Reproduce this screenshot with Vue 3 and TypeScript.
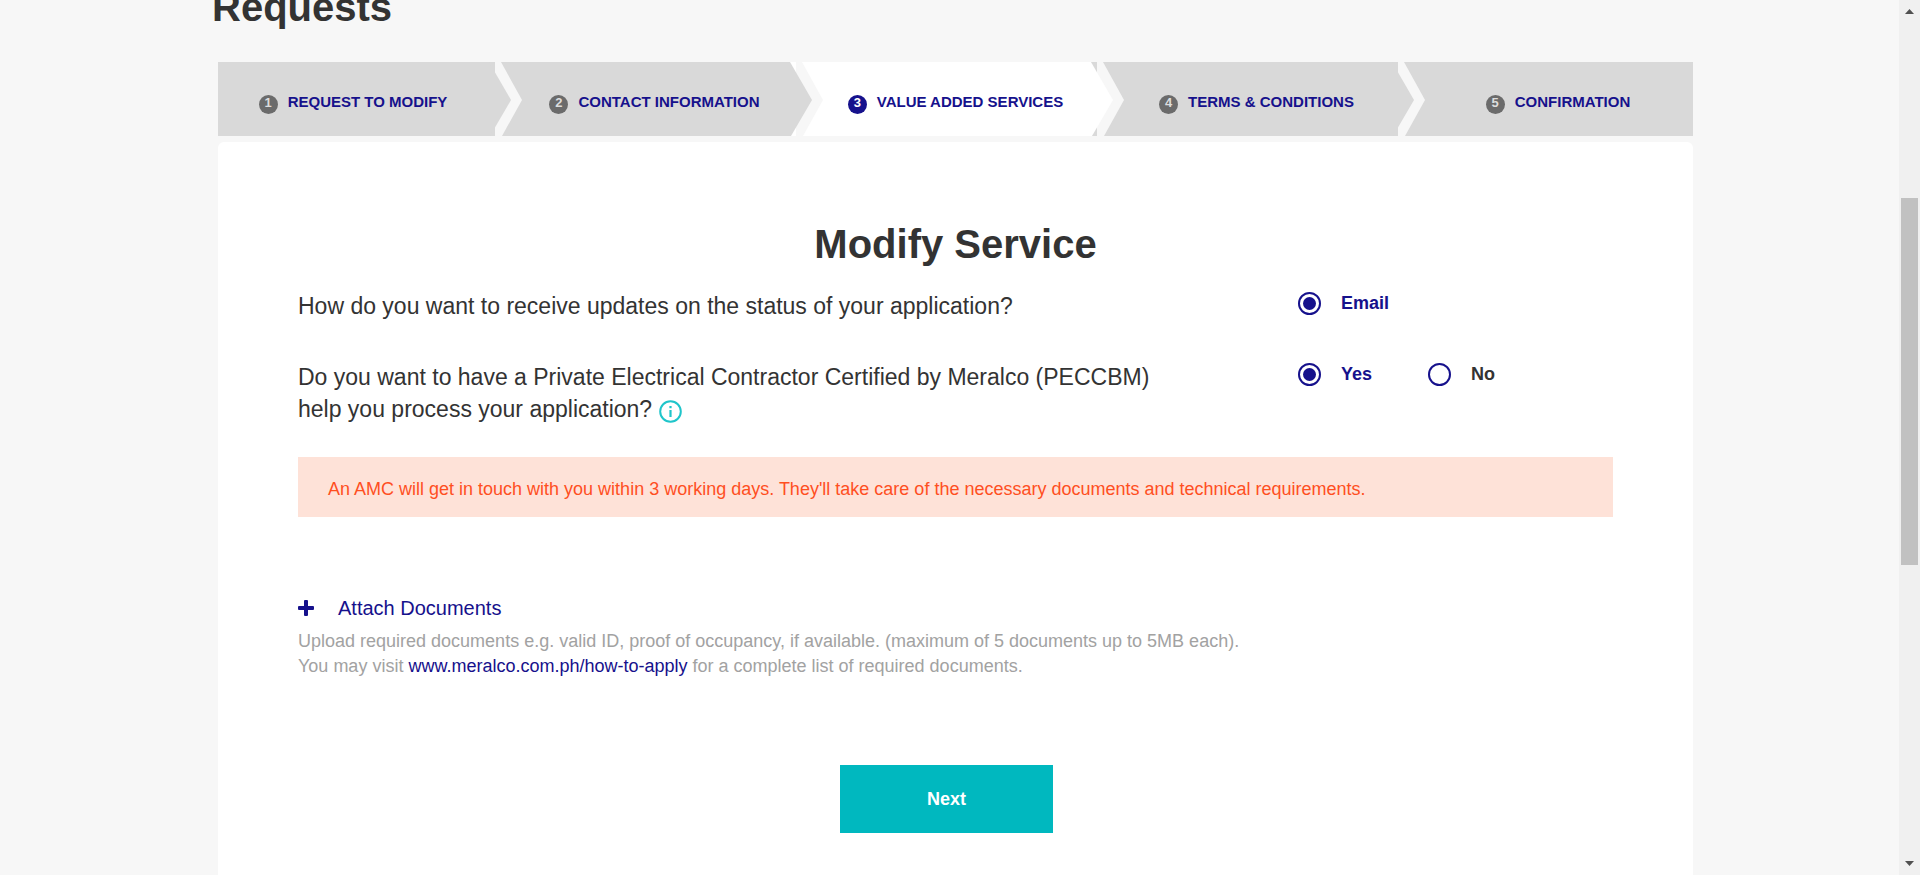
<script setup lang="ts">
import { ref } from 'vue'

interface Step {
  id: number
  label: string
}

const steps: Step[] = [
  { id: 1, label: 'REQUEST TO MODIFY' },
  { id: 2, label: 'CONTACT INFORMATION' },
  { id: 3, label: 'VALUE ADDED SERVICES' },
  { id: 4, label: 'TERMS & CONDITIONS' },
  { id: 5, label: 'CONFIRMATION' },
]

const activeStep = 3
const updates = ref('email')
const contractor = ref('yes')
</script>

<template>
  <div class="page">
    <main class="main">
      <h1 class="page-title">Requests</h1>

      <ol class="steps">
        <li v-for="step in steps" :key="step.id" class="step" :class="{ active: step.id === activeStep, after: step.id === activeStep + 1 }">
          <svg v-if="step.id > 1" class="chevron" viewBox="0 0 33 74" preserveAspectRatio="none" aria-hidden="true">
            <rect class="chevron-next" width="6" height="74" />
            <path class="chevron-gap" d="M6 0H12L33 38L13 74H6Z" />
            <path class="chevron-prev" d="M0 0L22 38L1 74H0Z" />
          </svg>
          <a class="step-link" href="#">
            <span class="step-number">{{ step.id }}</span>
            <span>{{ step.label }}</span>
          </a>
        </li>
      </ol>

      <form class="card" @submit.prevent>
        <h2 class="card-title">Modify Service</h2>

        <div class="question" role="radiogroup" aria-labelledby="q-updates">
          <p id="q-updates" class="question-text">How do you want to receive updates on the status of your application?</p>
          <div class="options">
            <label class="option"><input v-model="updates" type="radio" name="updates" value="email" /><span>Email</span></label>
          </div>
        </div>

        <div class="question" role="radiogroup" aria-labelledby="q-contractor">
          <p id="q-contractor" class="question-text">
            Do you want to have a Private Electrical Contractor Certified by Meralco (PECCBM) help you process your application?
            <svg class="info" viewBox="0 0 23 23" aria-hidden="true">
              <circle cx="11.5" cy="11.5" r="10.3" fill="none" stroke="currentColor" stroke-width="2" />
              <rect x="10.4" y="6" width="2.2" height="2.2" fill="currentColor" />
              <rect x="10.4" y="10" width="2.2" height="7" fill="currentColor" />
            </svg>
          </p>
          <div class="options">
            <label class="option"><input v-model="contractor" type="radio" name="contractor" value="yes" /><span>Yes</span></label>
            <label class="option"><input v-model="contractor" type="radio" name="contractor" value="no" /><span>No</span></label>
          </div>
        </div>

        <p class="notice">An AMC will get in touch with you within 3 working days. They'll take care of the necessary documents and technical requirements.</p>

        <button class="attach" type="button">
          <svg class="plus" viewBox="0 0 16 16" aria-hidden="true">
            <path d="M7 0H9Q10 0 10 1V6H15Q16 6 16 7V9Q16 10 15 10H10V15Q10 16 9 16H7Q6 16 6 15V10H1Q0 10 0 9V7Q0 6 1 6H6V1Q6 0 7 0Z" fill="currentColor" />
          </svg>
          <span>Attach Documents</span>
        </button>
        <p class="hint">
          Upload required documents e.g. valid ID, proof of occupancy, if available. (maximum of 5 documents up to 5MB each).<br />
          You may visit <a href="#">www.meralco.com.ph/how-to-apply</a> for a complete list of required documents.
        </p>

        <button class="next" type="submit">Next</button>
      </form>
    </main>

    <div class="scrollbar" aria-hidden="true">
      <svg class="scroll-arrow" viewBox="0 0 21 21"><path d="M6 14H15L10.5 9Z" fill="#505050" /></svg>
      <div class="track-before"></div>
      <div class="thumb"></div>
      <div class="track-after"></div>
      <svg class="scroll-arrow" viewBox="0 0 21 21"><path d="M6 7H15L10.5 12Z" fill="#505050" /></svg>
    </div>
  </div>
</template>

<style>
body {
  margin: 0;
  background: #f7f7f7;
}
</style>

<style scoped>
.page {
  --navy: #16118c;
  --grey: #d9d9d9;
  --page: #f7f7f7;
  display: flex;
  min-height: 100vh;
  background: var(--page);
  color: #333;
  font-family: "Liberation Sans", Arial, sans-serif;
  overflow: hidden;
}

.main {
  flex: 1;
  display: flex;
  flex-direction: column;
  padding: 0 206px 0 218px;
}

h1,
h2,
p,
ol {
  margin: 0;
  padding: 0;
}

.page-title {
  margin: -13px 0 35px -6px;
  font-size: 40px;
  line-height: 40px;
}

.steps {
  display: grid;
  grid-template-columns: 277fr 301fr 301fr 301fr 295fr;
  margin-bottom: 6px;
  list-style: none;
}

.step {
  --own: var(--grey);
  --prev: var(--grey);
  position: relative;
  display: flex;
  align-items: center;
  justify-content: center;
  box-sizing: border-box;
  min-height: 74px;
  padding: 6px 0 0 18px;
  background: var(--own);
}

.step:first-child {
  padding: 6px 7px 0 0;
}

.step:last-child {
  padding-left: 25px;
}

.step.active {
  --own: #fff;
}

.step.after {
  --prev: #fff;
}

.chevron {
  position: absolute;
  top: 0;
  left: -6px;
  width: 33px;
  height: 100%;
}

.chevron-next {
  fill: var(--own);
}

.chevron-gap {
  fill: var(--page);
}

.chevron-prev {
  fill: var(--prev);
}

.step-link {
  display: flex;
  align-items: flex-end;
  gap: 10px;
  color: var(--navy);
  font-size: 15px;
  font-weight: 700;
  line-height: 24px;
  text-decoration: none;
}

.step-number {
  width: 19px;
  height: 19px;
  border-radius: 50%;
  background: #6b6b6b;
  color: #ddd;
  font-size: 13px;
  line-height: 15px;
  text-align: center;
}

.active .step-number {
  background: var(--navy);
  color: #fff;
}

.card {
  flex: 1;
  display: flex;
  flex-direction: column;
  padding: 78px 80px 42px;
  border-radius: 6px 6px 0 0;
  background: #fff;
}

.card-title {
  margin-bottom: 22px;
  font-size: 40px;
  line-height: 48px;
  text-align: center;
}

.question {
  display: grid;
  grid-template-columns: 1fr 315px;
  align-items: start;
  margin-bottom: 39px;
}

.question + .question {
  margin-bottom: 32px;
}

.question-text {
  max-width: 870px;
  font-size: 23px;
  line-height: 32px;
}

.info {
  width: 23px;
  height: 23px;
  vertical-align: -6px;
  color: #1fc5ca;
}

.options {
  display: flex;
}

.option {
  display: flex;
  align-items: center;
  gap: 20px;
  min-width: 130px;
  height: 27px;
  font-size: 18px;
  font-weight: 700;
}

.option input {
  appearance: none;
  box-sizing: border-box;
  width: 23px;
  height: 23px;
  margin: 0;
  border: 2px solid var(--navy);
  border-radius: 50%;
  background: #fff;
}

.option input:checked {
  padding: 3px;
  background: var(--navy) content-box;
}

.option input:checked + span {
  color: var(--navy);
}

.notice {
  padding: 19px 30px 15px;
  background: #fee2d8;
  color: #ff4f1f;
  font-size: 18px;
  line-height: 26px;
}

.attach {
  display: flex;
  align-items: center;
  align-self: flex-start;
  gap: 24px;
  margin: 78px 0 8px;
  padding: 0;
  border: 0;
  background: none;
  color: var(--navy);
  font: inherit;
  font-size: 20px;
  line-height: 26px;
}

.plus {
  width: 16px;
  height: 16px;
}

.hint {
  color: #a2a2a2;
  font-size: 18px;
  line-height: 25px;
}

.hint a {
  color: var(--navy);
  text-decoration: none;
}

.next {
  align-self: center;
  width: 213px;
  height: 68px;
  margin: 86px 18px 0 0;
  border: 0;
  background: #00b8bf;
  color: #fff;
  font: inherit;
  font-size: 18px;
  font-weight: 700;
}

.scrollbar {
  display: flex;
  flex-direction: column;
  width: 21px;
  background: #f0f0f0;
}

.scroll-arrow {
  width: 21px;
  height: 21px;
}

.track-before {
  flex: 177;
}

.thumb {
  flex: 367;
  margin: 0 2px;
  background: #c1c1c1;
}

.track-after {
  flex: 289;
}
</style>
